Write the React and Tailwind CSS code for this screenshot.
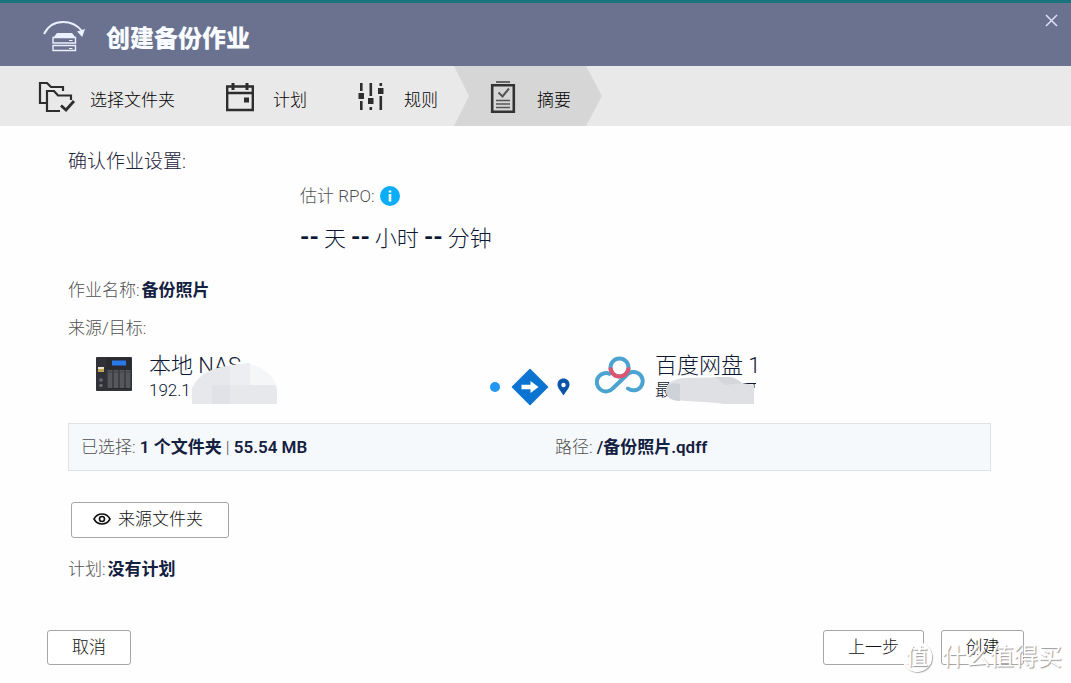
import React from "react";

const steps = [
  { id: "folders", label: "选择文件夹", icon: FoldersIcon },
  { id: "schedule", label: "计划", icon: CalendarIcon },
  { id: "rules", label: "规则", icon: SlidersIcon },
  { id: "summary", label: "摘要", icon: SummaryIcon },
];

const stepLayout = {
  folders: "pl-[38px] gap-[14px]",
  schedule: "pl-[51px] gap-[19px]",
  rules: "pl-[51px] gap-5",
  summary:
    "ml-4 pl-9 pr-[31px] gap-[21px] bg-[#d6d6d6] [clip-path:polygon(0_0,132px_0,100%_50%,132px_100%,0_100%,15px_50%)]",
};

const rpo = ["天", "小时", "分钟"];

function JobIcon() {
  return (
    <svg width="44" height="34" viewBox="0 0 44 34" fill="none" className="text-[#e9f0ff]" aria-hidden="true">
      <path d="M2 14C6 6 13 2 21 2c8 0 15 4 19 9" stroke="currentColor" strokeWidth="1.8" />
      <path d="M35 11.500l8-2.500-2.800 8z" fill="currentColor" />
      <path d="M15 13h15l4 5H11z" fill="currentColor" />
      <path d="M11 17.500h22.500v5.500H11zM11 25.500h22.500v5H11z" stroke="currentColor" strokeWidth="1.400" />
      <path d="M27 20.500h3.500M27 28.500h3.500" stroke="currentColor" />
    </svg>
  );
}

function FoldersIcon() {
  return (
    <svg width="38" height="32" viewBox="0 0 38 32" fill="none" stroke="#2d2d2d" strokeWidth="2.200" aria-hidden="true">
      <path d="M8 22H2V2h7l4 4h12v4" />
      <path d="M22 30H9V10h7l4 4.500h13V19" />
      <path d="M23 24.500l5 4.500 8-9" strokeWidth="2.800" />
    </svg>
  );
}

function CalendarIcon() {
  return (
    <svg width="28" height="30" viewBox="0 0 28 30" fill="none" stroke="#2d2d2d" strokeWidth="2.400" aria-hidden="true">
      <path d="M1.200 4.500h25.600v23.500H1.200zM1.200 11h25.600" />
      <path d="M7 1v7M21 1v7" strokeWidth="3" />
      <path d="M18 15.500h5v5h-5z" fill="#2d2d2d" stroke="none" />
    </svg>
  );
}

function SlidersIcon() {
  return (
    <svg width="26" height="30" viewBox="0 0 26 30" fill="#2d2d2d" aria-hidden="true">
      <path d="M2 1h2.600v8H2zM2 19h2.600v9H2zM.500 11h5.500v6H.500z" />
      <path d="M11.500 1h2.600v13h-2.600zM11.500 25h2.600v3h-2.600zM10 16h5.500v6H10z" />
      <path d="M21.500 1h2.600v3h-2.600zM21.500 14h2.600v14h-2.600zM20 6h5.500v6H20z" />
    </svg>
  );
}

function SummaryIcon() {
  return (
    <svg width="26" height="34" viewBox="0 0 26 34" fill="none" stroke="#333" aria-hidden="true">
      <path d="M6 2h14" strokeWidth="2" stroke="#666" />
      <path d="M2.200 5.200h21.600v26.600H2.200z" strokeWidth="2.600" />
      <path d="M8.500 12.500l4 4 6.500-8" strokeWidth="2" stroke="#555" />
      <path d="M6 20.500h14M6 24h14M6 27.500h14" strokeWidth="1.400" stroke="#555" />
    </svg>
  );
}

function InfoIcon() {
  return (
    <svg width="20" height="20" viewBox="0 0 20 20" role="img" aria-label="info">
      <circle cx="10" cy="10" r="10" fill="#0aaef8" />
      <path d="M8.700 4.500h2.600v2H8.700zM8.700 8h2.600v7.500H8.700z" fill="#fff" />
    </svg>
  );
}

function NasIcon() {
  return (
    <svg width="36" height="34" viewBox="0 0 36 34" aria-hidden="true">
      <rect width="36" height="34" rx="1" fill="#303238" />
      <rect x="10" y="1" width="25" height="11" fill="#292b31" />
      <rect x="16" y="3.500" width="14" height="5" fill="#2878e8" />
      <rect x="2" y="10" width="6" height="2" fill="#e8e4d0" />
      <rect x="2" y="12" width="6" height="3" fill="#c5a451" />
      <rect x="11" y="12.500" width="24" height="19.500" fill="#26282d" />
      <path d="M11.500 13h5v18h-5zM17.500 13h5v18h-5zM23.500 13h5v18h-5zM29.500 13h5v18h-5z" fill="#55575d" />
      <path d="M12.500 15h3M18.500 15h3M24.500 15h3M30.500 15h3" stroke="#3a3c42" />
      <circle cx="5" cy="23" r="1.800" fill="#6a6c72" />
      <circle cx="5" cy="28.500" r="1.800" fill="#6a6c72" />
    </svg>
  );
}

function DirectionIcon() {
  return (
    <svg width="84" height="38" viewBox="0 0 84 38" aria-hidden="true">
      <circle cx="6" cy="19" r="5" fill="#2196f3" />
      <path d="M41 1.500L58.500 19 41 36.500 23.500 19z" fill="#0b74d1" stroke="#0b74d1" strokeWidth="1.500" strokeLinejoin="round" />
      <path d="M32.500 16.800h9V13l8 6-8 6v-3.800h-9z" fill="#fff" />
      <path d="M74.500 10.500c-3.600 0-6 2.500-6 6 0 4 3.500 6.500 6 11 2.500-4.500 6-7 6-11 0-3.500-2.400-6-6-6z" fill="#0a55a8" />
      <circle cx="74.500" cy="17" r="2.200" fill="#fff" />
    </svg>
  );
}

function CloudLogo() {
  return (
    <svg width="50" height="38" viewBox="0 0 50 38" fill="none" stroke="#4aa3d0" strokeWidth="4" aria-hidden="true">
      <circle cx="24.500" cy="11.500" r="9" />
      <path d="M31 19.800L18 32.200A9.200 9.200 0 1 1 16 18.500" />
      <path d="M31 19.800A9.200 9.200 0 1 1 33 32.500" strokeLinecap="round" />
      <path d="M15.500 11.500a9 9 0 0 0 18 0" stroke="#df5570" />
    </svg>
  );
}

function EyeIcon() {
  return (
    <svg width="18" height="12" viewBox="0 0 18 12" fill="none" stroke="#111" strokeWidth="1.600" aria-hidden="true">
      <path d="M1 6c1.700-3.200 4.500-5 8-5s6.300 1.800 8 5c-1.700 3.200-4.500 5-8 5S2.700 9.200 1 6z" />
      <circle cx="9" cy="6" r="2.500" />
    </svg>
  );
}

function Button({ children, className = "" }) {
  return (
    <button
      type="button"
      className={`flex items-center justify-center rounded-[3px] border border-[#a6a6a6] bg-white pb-[2px] text-[17px] text-[#111] ${className}`}
    >
      {children}
    </button>
  );
}

function Value({ children }) {
  return <strong className="font-semibold text-[#14203f]">{children}</strong>;
}

const App = () => {
  return (
    <div className="relative min-h-screen bg-[#fefefe] font-['Roboto','Noto_Sans_CJK_SC',sans-serif] text-[17px] font-light leading-6 text-[#505050]">
      {/* Title bar */}
      <header className="flex h-[66px] items-start justify-between border-t-3 border-[#19737f] bg-[#6b728f]">
        <div className="flex h-full items-center gap-5 pl-[42px]">
          <div className="pt-1">
            <JobIcon />
          </div>
          <h1 className="pt-2 text-2xl font-black text-[#f8fbff]">创建备份作业</h1>
        </div>
        <button type="button" aria-label="关闭" className="mr-[13px] mt-[11px]">
          <svg width="13" height="13" viewBox="0 0 13 13" stroke="#dbe2f5" strokeWidth="1.500">
            <path d="M1 1l11 11M12 1L1 12" />
          </svg>
        </button>
      </header>

      {/* Wizard steps */}
      <nav className="bg-[#e9e9e9]">
        <ol className="flex h-[60px] text-black">
          {steps.map(({ id, label, icon: Icon }) => (
            <li
              key={id}
              aria-current={id === "summary" ? "step" : undefined}
              className={`flex items-center ${stepLayout[id]}`}
            >
              <div className="pt-[2px]">
                <Icon />
              </div>
              <span className="pt-2">{label}</span>
            </li>
          ))}
        </ol>
      </nav>

      <main className="pl-[68px] pr-20 pt-[22px]">
        <h2 className="text-[19px] leading-7 text-[#1c2139]">确认作业设置:</h2>

        <div className="mt-2 pl-[232px]">
          <div className="flex items-center gap-[5px]">
            <span>估计 RPO:</span>
            <InfoIcon />
          </div>
          <p className="mt-[15px] flex gap-[5px] text-[22px] leading-8 text-[#0c1733]">
            {rpo.map((unit) => (
              <React.Fragment key={unit}>
                <span className="-mt-[2px] text-2xl leading-8 font-bold">--</span>
                <span>{unit}</span>
              </React.Fragment>
            ))}
          </p>
        </div>

        <p className="mt-[23px] flex gap-[2px]">
          <span>作业名称:</span>
          <Value>备份照片</Value>
        </p>
        <p className="mt-[14px]">来源/目标:</p>

        {/* Source and destination */}
        <div className="mt-3 grid grid-cols-[421fr_107fr_395fr] text-[#0c1733]">
          <div className="relative flex gap-[17px] pl-7">
            <div className="pt-[5px]">
              <NasIcon />
            </div>
            <div>
              <p className="text-[22px] leading-7">本地 NAS</p>
              <p className="leading-5">192.1</p>
            </div>
            <svg className="absolute left-[124px] top-[11px]" width="86" height="41" viewBox="0 0 86 41" aria-hidden="true">
              <path d="M0 41V25C7 10 22 3 44 2l14-2v11h14c8 5 13 9 13 17v13z" fill="#e6e8ec" />
              <path d="M38 2l20-2v22H38z" fill="#eceef1" />
              <path d="M58 1c13 4 21 10 27 21H58z" fill="#f5f6f8" />
              <path d="M20 22h18v19H20z" fill="#e0e2e7" />
            </svg>
          </div>

          <div className="pt-4">
            <DirectionIcon />
          </div>

          <div className="relative flex gap-[10px]">
            <div className="-ml-px pt-1">
              <CloudLogo />
            </div>
            <div>
              <p className="text-[22px] leading-7">百度网盘 1</p>
              <p className="leading-5">最</p>
            </div>
            <svg className="absolute left-[70px] top-[25px]" width="92" height="28" viewBox="0 0 92 28" aria-hidden="true">
              <path d="M77 6.500h13M88 6v5" stroke="#0c1733" />
              <path d="M0 13C1 5 8 2 18 1l44-1c6 0 10 3 14 6l12 2v19H58c-18-3-36-2-48-4C4 23 0 19 0 13z" fill="#dfe0e4" />
              <path d="M0 13C1 7 6 5 14 7v17C5 24 0 20 0 13z" fill="#cfd1d9" />
              <path d="M50 0h12c6 0 10 3 14 6l-18 2z" fill="#d4d6dc" />
            </svg>
          </div>
        </div>

        <div className="mt-[17px] grid h-12 grid-cols-[474fr_423fr] items-center border border-[#dfe3e6] bg-[#f5f9fc] px-3 pb-px">
          <p>
            已选择: <Value>1 个文件夹</Value> | <Value>55.54 MB</Value>
          </p>
          <p>
            路径: <Value>/备份照片.qdff</Value>
          </p>
        </div>

        <div className="mt-[31px] flex pl-[3px]">
          <Button className="h-9 w-[158px] gap-[7px] pr-1">
            <EyeIcon />
            来源文件夹
          </Button>
        </div>

        <p className="mt-[19px] flex gap-[2px]">
          <span>计划:</span>
          <Value>没有计划</Value>
        </p>
      </main>

      <footer className="mt-[49px] flex gap-[17px] px-[47px] pb-4">
        <Button className="mr-auto h-[35px] w-[84px]">取消</Button>
        <Button className="h-[35px] w-[101px]">上一步</Button>
        <Button className="h-[35px] w-[83px]">创建</Button>
      </footer>

      {/* Site watermark */}
      <div className="pointer-events-none absolute bottom-[10px] right-[9px] flex items-center gap-[10px] text-white [text-shadow:1px_1px_1px_#999]">
        <span className="flex size-[30px] items-center justify-center rounded-full border-2 border-white bg-white/70 text-[22px] font-medium shadow-[1px_1px_1px_#aaa]">
          值
        </span>
        <span className="text-2xl font-normal leading-8">什么值得买</span>
      </div>
    </div>
  );
};

export default App;
